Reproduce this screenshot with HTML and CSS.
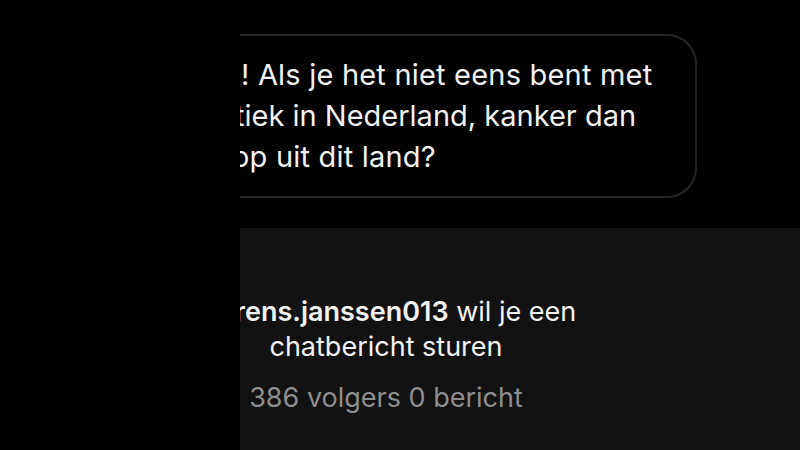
FILE: index.html
```html
<!DOCTYPE html>
<html lang="nl">
<head>
    <meta charset="UTF-8">
    <meta name="viewport" content="width=device-width, initial-scale=1.0">
    <title>Chatverzoek</title>
    <link rel="stylesheet" href="styles.css">
</head>
<body>
    <div class="screen">
        <div class="edge"></div>
        <div class="view">
            <div class="bubble">
                <div class="line l1">! Als je het niet eens bent met</div>
                <div class="line l2">tiek in Nederland, kanker dan</div>
                <div class="line l3">op uit dit land?</div>
            </div>
            <div class="request">
                <div class="request-text">
                    <div class="title"><b>laurens.janssen013</b> wil je een<br>chatbericht sturen</div>
                    <div class="meta">386 volgers 0 bericht</div>
                </div>
            </div>
        </div>
    </div>
</body>
</html>
```

FILE: styles.css
```css
body {
    margin: 0;
    background-color: #000;
    font-family: Inter, "Noto Sans", sans-serif;
    color: #f2f2f2;
    overflow: hidden;
}
.screen {
    display: flex;
    width: 800px;
    height: 450px;
}
.edge {
    width: 240px;
    flex-shrink: 0;
    background-color: #000;
}
.view {
    flex: 1;
    overflow: hidden;
    padding-top: 34px;
}
.bubble {
    margin-left: -40px;
    width: 454px;
    height: 123px;
    padding: 18px 0 19px 39px;
    border: 2px solid #262626;
    border-radius: 30px;
}
.line {
    font-size: 29px;
    line-height: 41px;
    letter-spacing: 0.2px;
    white-space: nowrap;
}
.l2 {
    margin-left: -6px;
    letter-spacing: 0;
}
.l3 {
    margin-left: -9px;
}
.request {
    margin-top: 30px;
    height: 300px;
    background-color: #121212;
    padding-top: 66px;
}
.request-text {
    margin-left: -270px;
    width: 832px;
    text-align: center;
    font-size: 27px;
    line-height: 35px;
    white-space: nowrap;
}
.title b {
    font-weight: 600;
}
.meta {
    margin-top: 16px;
    color: #8e8e8e;
}
```
